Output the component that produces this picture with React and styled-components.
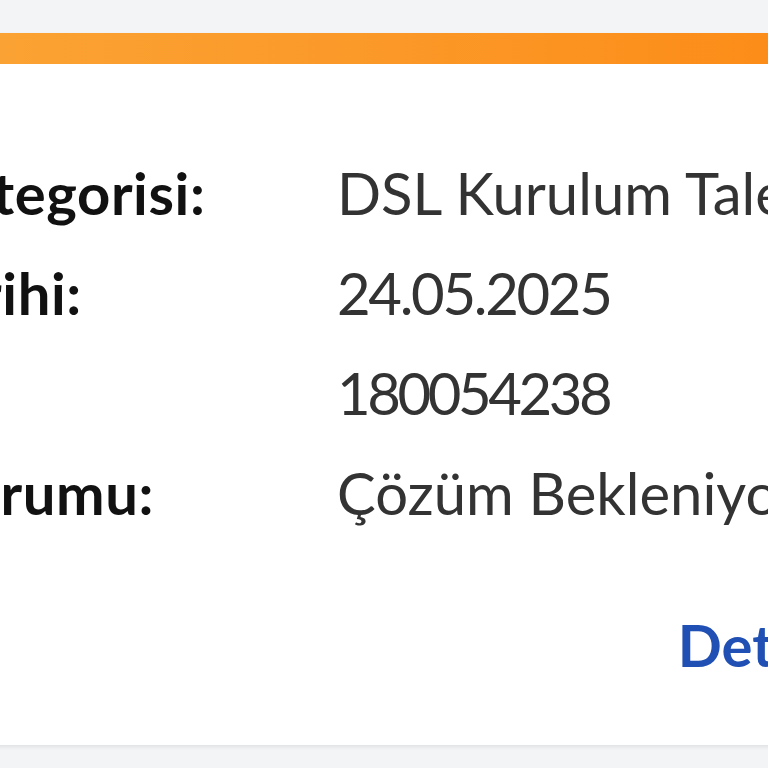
import React from 'react'
import styled, { createGlobalStyle } from 'styled-components'

const Global = createGlobalStyle`
html, body {
  margin:0;
  padding:0;
  background:#f3f4f6;
  overflow:hidden;
}
`;

const Page = styled.div`
width:768px;
height:768px;
overflow:hidden;
padding-top:33px;
box-sizing:border-box;
font-family:Lato, "Open Sans", sans-serif;
`;

const Card = styled.div`
width:1120px;
margin-left:-231px;
background:#ffffff;
box-shadow:0 2px 4px rgba(0,0,0,0.08);
`;

const Bar = styled.div`
height:31px;
background:linear-gradient(90deg, #faa83a 0%, #fb9a2a 50%, #fd8914 100%);
`;

const Body = styled.div`
padding:79px 0 50px 0;
`;

const Rows = styled.div`
display:grid;
grid-template-columns:568px 1fr;
`;

const Label = styled.div`
font-size:58px;
line-height:100px;
font-weight:700;
letter-spacing:0.6px;
color:#111111;
white-space:nowrap;
`;

const Value = styled.div`
font-size:58px;
line-height:100px;
font-weight:400;
letter-spacing:${p => p.$spacing || '0'};
color:#333333;
white-space:nowrap;
`;

const Footer = styled.div`
display:flex;
justify-content:flex-end;
margin-top:52px;
padding-right:56px;
`;

const Link = styled.a`
font-size:58px;
line-height:100px;
font-weight:700;
color:#2050b4;
cursor:pointer;
`;

const items = [
  ['Talep Kategorisi:', 'DSL Kurulum Talebi', '0'],
  ['Talep Tarihi:', '24.05.2025', '-2.3px'],
  ['Talep ID:', '180054238', '-3.4px'],
  ['Talep Durumu:', 'Çözüm Bekleniyor', '0'],
];

const App = () => {
  return (
    <Page>
      <Global />
      <Card>
        <Bar />
        <Body>
          <Rows>
            {items.map(([k, v, sp]) => (
              <React.Fragment key={k}>
                <Label>{k}</Label>
                <Value $spacing={sp}>{v}</Value>
              </React.Fragment>
            ))}
          </Rows>
          <Footer>
            <Link>Detay</Link>
          </Footer>
        </Body>
      </Card>
    </Page>
  )
}

export default App
